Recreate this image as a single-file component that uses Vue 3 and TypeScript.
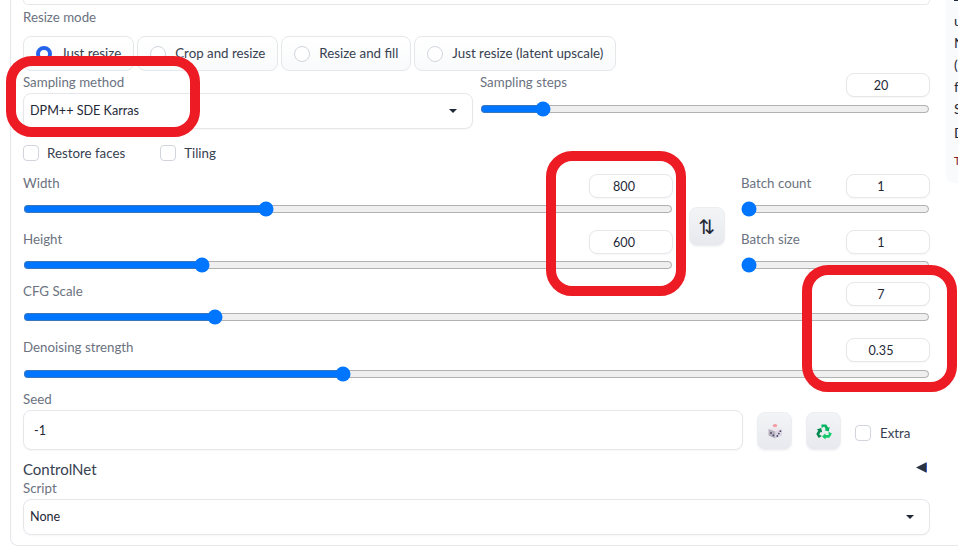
<script setup lang="ts">
import { reactive, ref } from 'vue'

const resizeModes = ['Just resize', 'Crop and resize', 'Resize and fill', 'Just resize (latent upscale)']
const resizeMode = ref(resizeModes[0])
const restoreFaces = ref(false)
const tiling = ref(false)
const extra = ref(false)
const seed = ref('-1')
const sidebarLines = ['u', 'N', '(', 'f', 'S', 'D']

const values = reactive({
  steps: 20,
  width: 800,
  height: 600,
  count: 1,
  size: 1,
  cfg: 7,
  denoise: 0.35,
})

function swap(): void {
  const w = values.width
  values.width = values.height
  values.height = w
}
</script>

<template>
  <div class="page">
    <div class="panel">
      <div class="stub"></div>

      <div class="label resize-label">Resize mode</div>
      <div class="radios">
        <label v-for="m in resizeModes" :key="m" class="radio">
          <input v-model="resizeMode" class="sr" type="radio" :value="m" />
          <span class="dot" :class="{ on: resizeMode === m }"></span>
          <span class="radio-text">{{ m }}</span>
        </label>
      </div>

      <div class="sampling">
        <div class="sampling-left">
          <div class="label">Sampling method</div>
          <div class="select">
            <span class="select-text">DPM++ SDE Karras</span>
            <span class="caret"></span>
          </div>
        </div>
        <div class="sampling-right">
          <div class="head">
            <span class="label">Sampling steps</span>
            <input v-model.number="values.steps" class="num" type="number" />
          </div>
          <input v-model.number="values.steps" class="range" type="range" min="1" max="150" step="1" />
        </div>
      </div>

      <div class="checks">
        <label class="check"><input v-model="restoreFaces" class="sr" type="checkbox" /><span class="box"></span>Restore faces</label>
        <label class="check"><input v-model="tiling" class="sr" type="checkbox" /><span class="box"></span>Tiling</label>
      </div>

      <div class="dims">
        <div class="dims-left">
          <div class="slider">
            <div class="head"><span class="label">Width</span><input v-model.number="values.width" class="num" type="number" /></div>
            <input v-model.number="values.width" class="range" type="range" min="64" max="2048" step="8" />
          </div>
          <div class="slider second">
            <div class="head"><span class="label">Height</span><input v-model.number="values.height" class="num" type="number" /></div>
            <input v-model.number="values.height" class="range" type="range" min="64" max="2048" step="8" />
          </div>
        </div>
        <button class="tool swap" type="button" @click="swap">⇅</button>
        <div class="dims-right">
          <div class="slider">
            <div class="head"><span class="label">Batch count</span><input v-model.number="values.count" class="num" type="number" /></div>
            <input v-model.number="values.count" class="range" type="range" min="1" max="100" step="1" />
          </div>
          <div class="slider second">
            <div class="head"><span class="label">Batch size</span><input v-model.number="values.size" class="num" type="number" /></div>
            <input v-model.number="values.size" class="range" type="range" min="1" max="8" step="1" />
          </div>
        </div>
      </div>

      <div class="slider cfg">
        <div class="head"><span class="label">CFG Scale</span><input v-model.number="values.cfg" class="num" type="number" /></div>
        <input v-model.number="values.cfg" class="range" type="range" min="1" max="30" step="0.5" />
      </div>
      <div class="slider denoise">
        <div class="head"><span class="label">Denoising strength</span><input v-model.number="values.denoise" class="num" type="number" /></div>
        <input v-model.number="values.denoise" class="range" type="range" min="0" max="1" step="0.01" />
      </div>

      <div class="label seed-label">Seed</div>
      <div class="seed-row">
        <input v-model="seed" class="seed" type="text" />
        <button class="tool icon" type="button" aria-label="Random seed">
          <svg width="18" height="18" viewBox="0 0 18 18">
            <path d="M9 4.5 16 7 9.5 9.5 2.5 7Z" fill="#ece6ee" />
            <path d="M2.5 7 9.5 9.5V16.5L2.5 13.5Z" fill="#b7b0bf" />
            <path d="M9.5 9.5 16 7V13.5L9.5 16.5Z" fill="#dcd6e6" />
            <ellipse cx="9" cy="3.4" rx="2.3" ry="1.5" fill="#f49aa3" />
            <circle cx="5" cy="11" r=".9" fill="#4b4560" />
            <circle cx="7.4" cy="13.4" r=".9" fill="#4b4560" />
            <circle cx="11.3" cy="14" r=".9" fill="#4b4560" />
            <circle cx="12.8" cy="11.6" r=".9" fill="#4b4560" />
            <circle cx="14.4" cy="9.2" r=".9" fill="#4b4560" />
          </svg>
        </button>
        <button class="tool icon" type="button" aria-label="Reuse seed">
          <svg width="18" height="18" viewBox="0 0 18 18">
            <path d="M6.4 2.4h4.8l2 3.4 1.5-.9-.9 4.6-4.4-1.3 1.4-.9-1.6-2.8-2.6 1.6Z" fill="#00b45f" />
            <path d="M6.4 2.4h4.8l2 3.4 1.5-.9-.9 4.6-4.4-1.3 1.4-.9-1.6-2.8-2.6 1.6Z" fill="#12c96b" transform="rotate(120 9 10)" />
            <path d="M6.4 2.4h4.8l2 3.4 1.5-.9-.9 4.6-4.4-1.3 1.4-.9-1.6-2.8-2.6 1.6Z" fill="#008a50" transform="rotate(240 9 10)" />
          </svg>
        </button>
        <label class="check extra"><input v-model="extra" class="sr" type="checkbox" /><span class="box"></span>Extra</label>
      </div>

      <div class="accordion">
        <span>ControlNet</span>
        <svg class="arrow" width="11" height="11" viewBox="0 0 11 11"><path d="M0 5.5 10 .5V10.5Z" fill="#2b3341" /><path d="M10 .5H11V10.5H10Z" fill="#2f5fc4" /></svg>
      </div>
      <div class="label">Script</div>
      <div class="select wide">
        <span class="select-text">None</span>
        <span class="caret"></span>
      </div>
    </div>

    <aside class="sidebar">
      <div class="sidebar-top"></div>
      <div v-for="(l, i) in sidebarLines" :key="i" class="sidebar-line">{{ l }}</div>
      <div class="sidebar-time">T</div>
    </aside>

    <div class="mark mark-a"></div>
    <div class="mark mark-b"></div>
    <div class="mark mark-c"></div>
  </div>
</template>

<style scoped>
.page {
  position: relative;
  width: 958px;
  height: 550px;
  overflow: hidden;
  background: #fff;
  font-family: Lato, "Noto Sans", sans-serif;
  font-size: 13.3px;
  color: #374151;
}
.panel {
  box-sizing: border-box;
  width: 1010px;
  height: 546px;
  margin-left: 10px;
  padding-left: 12px;
  border-left: 1px solid #e5e7eb;
  border-bottom: 1px solid #e5e7eb;
  border-bottom-left-radius: 8px;
}
.stub {
  box-sizing: border-box;
  width: 907px;
  height: 5px;
  border: 1px solid #e5e7eb;
  border-top: none;
  border-radius: 0 0 8px 8px;
}
.label {
  color: #6b7280;
  line-height: 18px;
  height: 18px;
}
.resize-label {
  margin-top: 3px;
}
.radios {
  display: flex;
  gap: 3px;
  margin-top: 10px;
}
.radio {
  box-sizing: border-box;
  display: flex;
  align-items: center;
  gap: 9px;
  height: 35px;
  padding: 0 12px;
  border: 1px solid #e5e7eb;
  border-radius: 8px;
  background: linear-gradient(#fff, #f9fafb);
}
.radio-text {
  padding-bottom: 1px;
}
.sr {
  position: absolute;
  opacity: 0;
  width: 0;
  height: 0;
  margin: 0;
}
.dot {
  box-sizing: border-box;
  width: 16px;
  height: 16px;
  flex: none;
  border: 1px solid #d1d5db;
  border-radius: 50%;
  background: #fff;
}
.dot.on {
  border: 4.5px solid #2563eb;
}
.sampling {
  display: flex;
  width: 907px;
  gap: 7px;
  margin-top: 2px;
}
.sampling-left {
  width: 450px;
  flex: none;
}
.sampling-right {
  flex: 1;
}
.sampling-right .range,
.denoise .range {
  margin-top: 4px;
}
.select {
  box-sizing: border-box;
  display: flex;
  align-items: center;
  justify-content: space-between;
  height: 36px;
  margin-top: 2px;
  padding: 0 15px 0 6px;
  border: 1px solid #e5e7eb;
  border-radius: 8px;
  background: #fff;
  color: #1f2937;
  font-size: 12.6px;
  box-shadow: 0 1px 2px rgba(0, 0, 0, 0.04);
}
.select-text {
  padding-bottom: 2px;
}
.select.wide {
  width: 907px;
}
.caret {
  width: 0;
  height: 0;
  border-left: 4px solid transparent;
  border-right: 4px solid transparent;
  border-top: 4px solid #1f2937;
}
.head {
  display: flex;
  justify-content: space-between;
  height: 24px;
}
.num {
  box-sizing: border-box;
  width: 84px;
  height: 24px;
  padding: 0 14px 0 0;
  border: 1px solid #e5e7eb;
  border-radius: 8px;
  background: #fff;
  color: #1f2937;
  font: inherit;
  font-size: 12.6px;
  text-align: center;
  outline: none;
  appearance: textfield;
  -moz-appearance: textfield;
  box-shadow: 0 1px 2px rgba(0, 0, 0, 0.04);
}
.num::-webkit-inner-spin-button,
.num::-webkit-outer-spin-button {
  -webkit-appearance: none;
  margin: 0;
}
.range {
  display: block;
  width: 100%;
  height: 16px;
  margin: 3px 0 0;
}
.checks {
  display: flex;
  gap: 35px;
  margin-top: 16px;
  height: 16px;
}
.check {
  display: flex;
  align-items: center;
  gap: 8px;
  color: #374151;
}
.box {
  box-sizing: border-box;
  width: 16px;
  height: 16px;
  flex: none;
  border: 1px solid #d1d5db;
  border-radius: 4px;
  background: #fff;
}
.dims {
  display: flex;
  width: 907px;
  margin-top: 13px;
}
.dims-left {
  width: 650px;
  flex: none;
}
.dims-right {
  flex: 1;
}
.second {
  margin-top: 13px;
}
.tool {
  box-sizing: border-box;
  flex: none;
  padding: 0;
  border: 1px solid #eceef1;
  border-radius: 8px;
  background: linear-gradient(#f3f4f6, #e8e9ee);
  box-shadow: 0 1px 2px rgba(0, 0, 0, 0.05);
  display: flex;
  align-items: center;
  justify-content: center;
}
.swap {
  width: 36px;
  height: 39px;
  margin: 33px 16px 0;
  color: #1f2937;
  font-family: "DejaVu Sans", sans-serif;
  font-size: 20px;
}
.cfg {
  width: 907px;
  margin-top: 9px;
}
.denoise {
  width: 907px;
  margin-top: 13px;
}
.seed-label {
  margin-top: 8px;
}
.seed-row {
  display: flex;
  align-items: center;
  margin-top: 2px;
}
.seed {
  box-sizing: border-box;
  width: 720px;
  height: 40px;
  padding: 0 10px;
  border: 1px solid #e5e7eb;
  border-radius: 8px;
  color: #1f2937;
  font: inherit;
  font-size: 12.6px;
  outline: none;
  box-shadow: 0 1px 2px rgba(0, 0, 0, 0.04);
}
.icon {
  width: 35px;
  height: 38px;
  margin-left: 14px;
  margin-top: 2px;
}
.extra {
  margin-left: 14px;
  margin-top: 5px;
  gap: 9px;
}
.accordion {
  display: flex;
  align-items: center;
  justify-content: space-between;
  box-sizing: border-box;
  width: 907px;
  height: 20px;
  margin-top: 9px;
  padding-right: 3px;
  color: #374151;
  font-size: 15px;
}
.arrow {
  margin-top: -4px;
}
.sidebar {
  position: absolute;
  top: 0;
  left: 946px;
  width: 40px;
  height: 183px;
  padding-left: 8px;
  box-sizing: border-box;
  background: #f9fafb;
  border-bottom-left-radius: 8px;
  color: #1f2937;
  font-size: 14px;
  overflow: hidden;
}
.sidebar-top {
  width: 8px;
  height: 1px;
  background: #1f2937;
  margin-bottom: 9px;
}
.sidebar-line {
  height: 22px;
  line-height: 22px;
}
.sidebar-line:nth-child(7) {
  margin-top: 2px;
}
.sidebar-time {
  margin-top: 10px;
  font-size: 11px;
  color: #7f1d1d;
}
.mark {
  position: absolute;
  box-sizing: border-box;
  border: 10px solid #ed1c24;
  border-radius: 26px;
  pointer-events: none;
}
.mark-a {
  left: 6px;
  top: 56px;
  width: 194px;
  height: 81px;
}
.mark-b {
  left: 546px;
  top: 151px;
  width: 140px;
  height: 145px;
}
.mark-c {
  left: 802px;
  top: 265px;
  width: 155px;
  height: 127px;
}
</style>
